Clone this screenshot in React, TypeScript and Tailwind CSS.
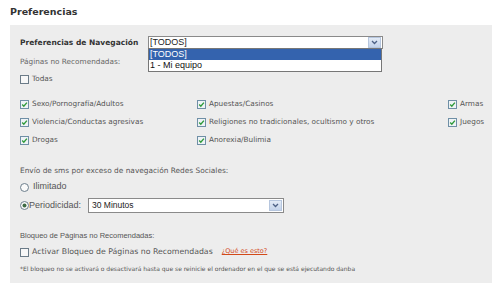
import React from 'react';

const label = "font-['DejaVu_Sans',sans-serif] text-[7.3px] text-[#555]";

const CheckBox = ({ checked }: { checked?: boolean }) => (
  <svg width="9" height="9" viewBox="0 0 9 9" className="shrink-0">
    <rect x="0.5" y="0.5" width="8" height="8" fill={checked ? '#eef3f6' : '#f7f7f7'} stroke={checked ? '#6f8fa6' : '#6b7b88'} />
    {checked && <path d="M2.2 4.6 L3.8 6.2 L6.9 2.6" fill="none" stroke="#2e9a3a" strokeWidth="1.4" />}
  </svg>
);

const Radio = ({ checked }: { checked?: boolean }) => (
  <svg width="9" height="9" viewBox="0 0 9 9" className="shrink-0">
    <circle cx="4.5" cy="4.5" r="4" fill="#fafafa" stroke="#6d7f8c" />
    {checked && <circle cx="4.5" cy="4.5" r="2" fill="#3f6b45" />}
  </svg>
);

const Arrow = () => (
  <div className="w-[13px] h-[11px] bg-gradient-to-b from-[#e3ebf6] to-[#c3d3ea] border border-[#b6c6de] flex items-center justify-center">
    <svg width="7" height="5" viewBox="0 0 7 5">
      <path d="M1 1 L3.5 3.5 L6 1" fill="none" stroke="#4d6185" strokeWidth="1.3" />
    </svg>
  </div>
);

const Check = ({ text, checked = true }: { text: string; checked?: boolean }) => (
  <div className="flex items-center gap-[3px]">
    <CheckBox checked={checked} />
    <span className={label}>{text}</span>
  </div>
);

export default function App() {
  return (
    <div className="w-[500px] h-[286px] bg-white overflow-hidden relative">
      <div className="pl-[10px] pt-[5px] h-[25px] font-['DejaVu_Sans',sans-serif] font-bold text-[9.5px] text-[#333]">
        Preferencias
      </div>
      <div className="ml-[10px] w-[482px] h-[258px] bg-[#ededed] pl-[10px] pt-[11px]">
        <div className="flex items-center h-[13px] relative">
          <span className="font-['DejaVu_Sans',sans-serif] font-bold text-[7.5px] text-[#333] w-[128px]">
            Preferencias de Navegación
          </span>
          <div className="w-[235px] h-[13px] bg-white border border-[#8a8a8a] flex items-center justify-between pr-[1px]">
            <span className="font-['Liberation_Sans',sans-serif] text-[9px] text-[#222] pl-[1px] leading-none">[TODOS]</span>
            <Arrow />
          </div>
          <div className="absolute left-[128px] top-[12px] w-[234px] bg-white border border-[#777] z-10">
            <div className="h-[11px] bg-[#3463ae] text-white font-['Liberation_Sans',sans-serif] text-[9px] leading-[11px] pl-[1px]">[TODOS]</div>
            <div className="h-[11px] text-[#111] font-['Liberation_Sans',sans-serif] text-[9px] leading-[11px] pl-[1px]">1 - Mi equipo</div>
          </div>
        </div>
        <div className={`mt-[7px] h-[12px] flex items-center ${label} text-[#666]`}>Páginas no Recomendadas:</div>
        <div className="mt-[5px] h-[12px] flex items-center">
          <Check text="Todas" checked={false} />
        </div>
        <div className="mt-[10px] grid grid-cols-[177px_251px_1fr] auto-rows-[18px] items-center">
          <Check text="Sexo/Pornografía/Adultos" />
          <Check text="Apuestas/Casinos" />
          <Check text="Armas" />
          <Check text="Violencia/Conductas agresivas" />
          <Check text="Religiones no tradicionales, ocultismo y otros" />
          <Check text="Juegos" />
          <Check text="Drogas" />
          <Check text="Anorexia/Bulimia" />
        </div>
        <div className="mt-[16px] h-[12px] flex items-center font-['DejaVu_Sans',sans-serif] text-[7.4px] text-[#555]">Envío de sms por exceso de navegación Redes Sociales:</div>
        <div className="mt-[4px] h-[12px] flex items-center gap-[4px]">
          <Radio />
          <span className="font-['Liberation_Sans',sans-serif] text-[9px] text-[#555]">Ilimitado</span>
        </div>
        <div className="mt-[5px] h-[15px] flex items-center">
          <Radio checked />
          <span className="font-['Liberation_Sans',sans-serif] text-[9px] text-[#555] w-[59px]">Periodicidad:</span>
          <div className="w-[196px] h-[15px] bg-white border border-[#8a8a8a] flex items-center justify-between pr-[1px]">
            <span className="font-['Liberation_Sans',sans-serif] text-[8.5px] text-[#222] pl-[3px] leading-none">30 Minutos</span>
            <Arrow />
          </div>
        </div>
        <div className="mt-[17px] h-[12px] flex items-center font-['Liberation_Sans',sans-serif] text-[7.5px] text-[#555]">Bloqueo de Páginas no Recomendadas:</div>
        <div className="mt-[4px] h-[12px] flex items-center gap-[3px]">
          <CheckBox />
          <span className="font-['DejaVu_Sans',sans-serif] text-[7.8px] text-[#555]">Activar Bloqueo de Páginas no Recomendadas</span>
          <a className="ml-[6px] font-['DejaVu_Sans',sans-serif] text-[6.5px] text-[#d24a1a] underline">¿Qué es esto?</a>
        </div>
        <div className="mt-[5px] h-[10px] flex items-center font-['DejaVu_Sans',sans-serif] text-[6px] text-[#555] whitespace-nowrap">
          *El bloqueo no se activará o desactivará hasta que se reinicie el ordenador en el que se está ejecutando danba
        </div>
      </div>
    </div>
  );
}
